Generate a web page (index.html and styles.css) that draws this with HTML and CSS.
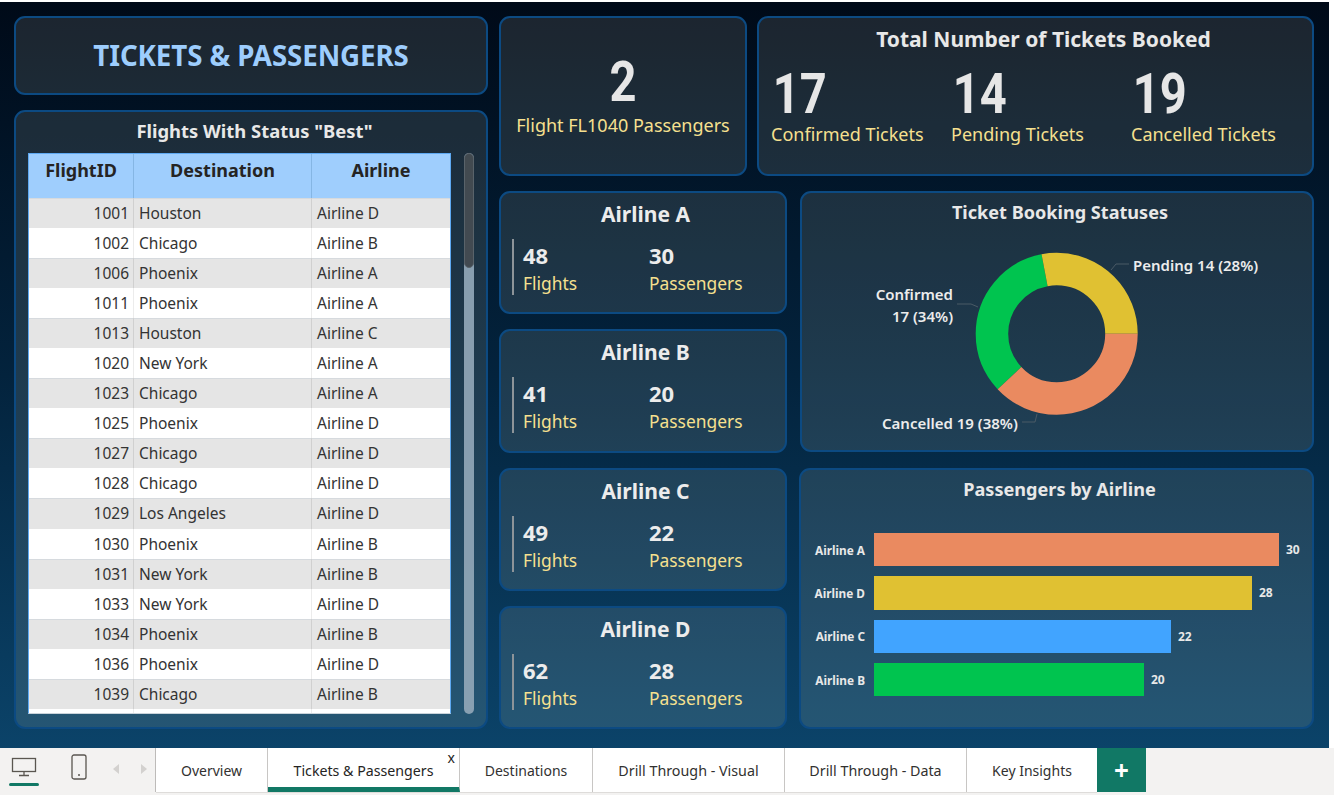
FILE: index.html
```html
<!DOCTYPE html>
<html lang="en">
<head>
<meta charset="utf-8">
<title>Tickets &amp; Passengers</title>
<link rel="stylesheet" href="styles.css">
</head>
<body>
<div class="topline"></div>
<main class="canvas">
  <section class="left">
    <header class="card title-card"><h1>TICKETS &amp; PASSENGERS</h1></header>
    <section class="card table-card">
      <h2 class="table-title">Flights With Status "Best"</h2>
      <div class="table-wrap">
        <div class="table">
          <div class="thead"><span>FlightID</span><span>Destination</span><span>Airline</span></div>
          <div class="row"><span class="id">1001</span><span>Houston</span><span>Airline D</span></div>
          <div class="row"><span class="id">1002</span><span>Chicago</span><span>Airline B</span></div>
          <div class="row"><span class="id">1006</span><span>Phoenix</span><span>Airline A</span></div>
          <div class="row"><span class="id">1011</span><span>Phoenix</span><span>Airline A</span></div>
          <div class="row"><span class="id">1013</span><span>Houston</span><span>Airline C</span></div>
          <div class="row"><span class="id">1020</span><span>New York</span><span>Airline A</span></div>
          <div class="row"><span class="id">1023</span><span>Chicago</span><span>Airline A</span></div>
          <div class="row"><span class="id">1025</span><span>Phoenix</span><span>Airline D</span></div>
          <div class="row"><span class="id">1027</span><span>Chicago</span><span>Airline D</span></div>
          <div class="row"><span class="id">1028</span><span>Chicago</span><span>Airline D</span></div>
          <div class="row"><span class="id">1029</span><span>Los Angeles</span><span>Airline D</span></div>
          <div class="row"><span class="id">1030</span><span>Phoenix</span><span>Airline B</span></div>
          <div class="row"><span class="id">1031</span><span>New York</span><span>Airline B</span></div>
          <div class="row"><span class="id">1033</span><span>New York</span><span>Airline D</span></div>
          <div class="row"><span class="id">1034</span><span>Phoenix</span><span>Airline B</span></div>
          <div class="row"><span class="id">1036</span><span>Phoenix</span><span>Airline D</span></div>
          <div class="row"><span class="id">1039</span><span>Chicago</span><span>Airline B</span></div>
          <div class="row stub"><span></span><span></span><span></span></div>
        </div>
        <div class="scrollbar"><div class="thumb"></div></div>
      </div>
    </section>
  </section>
  <section class="right">
    <div class="top-row">
      <section class="card flight-card">
        <div class="big">2</div>
        <div class="label">Flight FL1040 Passengers</div>
      </section>
      <section class="card total-card">
        <h2 class="total-title">Total Number of Tickets Booked</h2>
        <div class="totals">
          <div class="total"><div class="big">17</div><div class="label">Confirmed Tickets</div></div>
          <div class="total"><div class="big">14</div><div class="label">Pending Tickets</div></div>
          <div class="total"><div class="big">19</div><div class="label">Cancelled Tickets</div></div>
        </div>
      </section>
    </div>
    <div class="bottom-row">
      <div class="airlines">
        <section class="card airline"><h3>Airline A</h3><div class="stats"><div class="stat"><b>48</b><span>Flights</span></div><div class="stat"><b>30</b><span>Passengers</span></div></div></section>
        <section class="card airline"><h3>Airline B</h3><div class="stats"><div class="stat"><b>41</b><span>Flights</span></div><div class="stat"><b>20</b><span>Passengers</span></div></div></section>
        <section class="card airline"><h3>Airline C</h3><div class="stats"><div class="stat"><b>49</b><span>Flights</span></div><div class="stat"><b>22</b><span>Passengers</span></div></div></section>
        <section class="card airline"><h3>Airline D</h3><div class="stats"><div class="stat"><b>62</b><span>Flights</span></div><div class="stat"><b>28</b><span>Passengers</span></div></div></section>
      </div>
      <div class="charts">
        <section class="card donut-card">
          <h2 class="chart-title">Ticket Booking Statuses</h2>
          <div class="donut-area">
            <svg class="donut" viewBox="0 0 510 210" width="510" height="210">
              <circle cx="254.7" cy="101.8" r="64.75" fill="none" stroke="#00c44f" stroke-width="32.5" pathLength="100" stroke-dasharray="34 66" stroke-dashoffset="-63" transform="rotate(-90 254.7 101.8)"/>
              <circle cx="254.7" cy="101.8" r="64.75" fill="none" stroke="#e0c132" stroke-width="32.5" pathLength="100" stroke-dasharray="28 72" stroke-dashoffset="3" transform="rotate(-90 254.7 101.8)"/>
              <circle cx="254.7" cy="101.8" r="64.75" fill="none" stroke="#ea8a60" stroke-width="32.5" pathLength="100" stroke-dasharray="38 62" stroke-dashoffset="-25" transform="rotate(-90 254.7 101.8)"/>
              <path d="M309 38 L314 32 L327 32" fill="none" stroke="#4a5a66"/>
              <path d="M155 72 L169 72 L176 75" fill="none" stroke="#4a5a66"/>
              <path d="M220 190 L233 190 L235 182" fill="none" stroke="#4a5a66"/>
            </svg>
            <span class="dl dl-pending">Pending 14 (28%)</span>
            <span class="dl dl-confirmed">Confirmed<br>17 (34%)</span>
            <span class="dl dl-cancelled">Cancelled 19 (38%)</span>
          </div>
        </section>
        <section class="card bar-card">
          <h2 class="chart-title">Passengers by Airline</h2>
          <div class="bars">
            <div class="bar-row"><span class="bar-name">Airline A</span><div class="bar bar-a"></div><span class="bar-val">30</span></div>
            <div class="bar-row"><span class="bar-name">Airline D</span><div class="bar bar-d"></div><span class="bar-val">28</span></div>
            <div class="bar-row"><span class="bar-name">Airline C</span><div class="bar bar-c"></div><span class="bar-val">22</span></div>
            <div class="bar-row"><span class="bar-name">Airline B</span><div class="bar bar-b"></div><span class="bar-val">20</span></div>
          </div>
        </section>
      </div>
    </div>
  </section>
</main>
<nav class="tabbar">
  <div class="devices">
    <div class="device device-on">
      <svg width="26" height="20" viewBox="0 0 26 20"><rect x="1.5" y="1.5" width="23" height="13" fill="none" stroke="#5a5650" stroke-width="1.3"/><path d="M13 15v3M8 18.5h10" stroke="#5a5650" stroke-width="1.3"/></svg>
    </div>
    <div class="device device-phone">
      <svg width="18" height="26" viewBox="0 0 18 26"><rect x="2" y="1" width="14" height="24" rx="2" fill="none" stroke="#5a5650" stroke-width="1.3"/><path d="M8 21h2" stroke="#5a5650" stroke-width="1.3"/></svg>
    </div>
    <div class="arrows">
      <svg width="8" height="12" viewBox="0 0 8 12"><path d="M7 1v10L1 6z" fill="#d3d1cf"/></svg>
      <svg width="8" height="12" viewBox="0 0 8 12"><path d="M1 1v10l6-5z" fill="#d3d1cf"/></svg>
    </div>
  </div>
  <div class="tab tab-overview">Overview</div>
  <div class="tab tab-active">Tickets &amp; Passengers<span class="tab-x">x</span></div>
  <div class="tab tab-dest">Destinations</div>
  <div class="tab tab-visual">Drill Through - Visual</div>
  <div class="tab tab-data">Drill Through - Data</div>
  <div class="tab tab-key">Key Insights</div>
  <div class="tab-add">+</div>
</nav>
</body>
</html>
```
FILE: styles.css
```css
* { box-sizing: border-box; }
html, body { margin: 0; padding: 0; }
body {
  width: 1334px; height: 795px; overflow: hidden; background: #fff;
  font-family: "Noto Sans", "Open Sans", sans-serif; color: #e8e8e8;
}
h1, h2, h3 { margin: 0; }
.topline { height: 2px; background: #fff; }
.canvas {
  width: 1329px; height: 746px;
  background: linear-gradient(180deg, #000a18 0%, #03233d 50%, #0b4369 100%);
  padding: 14px 15px 19px 14px;
  display: flex; gap: 11px;
}
.card {
  background: rgba(255,255,225,.11);
  border: 2px solid #0c4a82;
  border-radius: 11px;
}
.left { width: 474px; display: flex; flex-direction: column; gap: 15px; }
.title-card { height: 79px; display: flex; align-items: center; justify-content: center; padding-bottom: 2px; }
h1 { font-size: 27.7px; font-weight: 700; color: #9dcdfd; letter-spacing: -.1px; }
.table-card { flex: 1; padding: 0 12px 11px 12px; display: flex; flex-direction: column; }
.table-title { font-size: 18.4px; line-height: 38px; height: 41px; padding-left: 7px; text-align: center; font-weight: 700; }
.table-wrap { flex: 1; display: flex; gap: 13px; min-height: 0; }
.table {
  width: 424px; height: 561px; overflow: hidden; background: #fff; color: #333;
  border: 1px solid #5ea9f2; border-bottom-color: #c9d3da; font-size: 15.5px;
}
.thead, .row { display: grid; grid-template-columns: 105px 178px 1fr; }
.thead {
  height: 44px; background: #9fcefd; color: #252423; font-size: 18px; font-weight: 700; text-align: center; line-height: 33px;
}
.thead span { border-right: 1px solid #85b6e4; }
.thead span:last-child { border: 0; }
.row { height: 30.05px; line-height: 30px; }
.row:nth-child(even) { background: #e5e5e5; box-shadow: inset 0 1px #d6dade; }
.row span { padding: 0 5px; border-right: 1px solid #d0d0d0; white-space: nowrap; }
.row:nth-child(odd) span { border-right-color: #ececec; }
.row span:last-child { border: 0; }
.row .id { text-align: right; padding-right: 4px; }
.scrollbar { width: 10px; height: 561px; border-radius: 5px; background: #8ea4b5; opacity: .95; }
.thumb { height: 115px; border-radius: 5px; background: #454c52; border: 1px solid #5d666d; }
.right { flex: 1; display: flex; flex-direction: column; gap: 15px; min-width: 0; }
.top-row { height: 160px; display: flex; gap: 10px; }
.flight-card { width: 248px; display: flex; flex-direction: column; align-items: center; padding-top: 33px; }
.big {
  font-family: "Roboto", "Liberation Sans", sans-serif; font-weight: 700; font-size: 56px; line-height: 62px;
  color: #e6e6e6; transform: scaleX(.84);
}
.label { font-size: 18px; line-height: 28px; color: #f6e08f; white-space: nowrap; }
.flight-card .label { margin-top: -2px; }
.total-card { flex: 1; padding: 6px 0 0 12px; }
.total-title { font-size: 21px; line-height: 30px; text-align: center; font-weight: 700; padding-left: 4px; }
.totals { display: grid; grid-template-columns: 180px 180px 1fr; margin-top: 14px; }
.total .big { padding-left: 2px; line-height: 52px; transform-origin: left center; }
.bottom-row { flex: 1; display: flex; gap: 12px; min-height: 0; }
.airlines { width: 288px; display: flex; flex-direction: column; gap: 15px; }
.airline { flex: 1; padding: 6px 11px 0 11px; }
.airline h3 { font-size: 21px; line-height: 30px; text-align: center; font-weight: 700; color: #ececec; padding-left: 5px; }
.stats { display: grid; grid-template-columns: 126px 1fr; border-left: 2px solid #8d9499; height: 56px; margin-top: 10px; padding: 3px 0 0 9px; }
.stat { display: flex; flex-direction: column; }
.stat b { font-size: 22px; line-height: 27px; font-weight: 700; color: #ececec; }
.stat span { font-size: 17.4px; line-height: 28px; color: #f6e08f; }
.charts { flex: 1; display: flex; flex-direction: column; gap: 16px; min-width: 0; }
.donut-card { height: 261px; margin-left: 1px; }
.bar-card { flex: 1; }
.chart-title { font-size: 18.1px; line-height: 26px; padding: 6px 0 0 6px; height: 39px; text-align: center; font-weight: 700; }
.donut-area { position: relative; height: 210px; }
.donut { display: block; }
.dl { position: absolute; font-size: 15px; line-height: 22px; font-weight: 600; color: #ececec; white-space: nowrap; }
.dl-pending { left: 331px; top: 22px; }
.dl-confirmed { right: 359px; top: 51px; text-align: right; }
.dl-cancelled { left: 80px; top: 180px; }
.bars { padding: 24px 0 0 73px; display: flex; flex-direction: column; gap: 10px; }
.bar-row { position: relative; display: flex; align-items: center; height: 33.3px; gap: 6px; }
.bar-name { position: absolute; right: 100%; margin-right: 9px; font-size: 11.8px; font-weight: 700; white-space: nowrap; }
.bar { height: 100%; }
.bar-a { width: 405px; background: #ea8a60; }
.bar-d { width: 378px; background: #e0c132; }
.bar-c { width: 297px; background: #41a4ff; }
.bar-b { width: 270px; background: #00c44f; }
.bar-val { font-size: 12px; font-weight: 700; margin-left: 1px; }
.tabbar { height: 47px; background: #f3f2f1; display: flex; align-items: stretch; padding-bottom: 3px; }
.devices { width: 156px; display: flex; border-right: 1px solid #bdbbb9; }
.device { width: 47px; display: flex; align-items: center; justify-content: center; padding-bottom: 6px; }
.device-on { position: relative; }
.device-on::after { content: ""; position: absolute; left: 9px; bottom: 6px; width: 30px; height: 3px; border-radius: 2px; background: #117865; }
.device-phone { width: 32px; margin-left: 16px; }
.arrows { display: flex; gap: 20px; align-items: center; margin-left: 17px; padding-bottom: 3px; }
.tab { background: #fff; color: #323130; font-size: 14px; display: flex; align-items: center; justify-content: center; border-right: 1px solid #c8c6c4; white-space: nowrap; box-shadow: 0 1px #dedcda; }
.tab-overview { width: 112px; }
.tab-active { width: 192px; position: relative; border-bottom: 5px solid #117865; color: #252423; padding-top: 5px; font-size: 14.2px; }
.tab-x { position: absolute; right: 4px; top: 1px; font-size: 14px; line-height: 18px; }
.tab-dest { width: 133px; }
.tab-visual { width: 192px; font-size: 14.3px; }
.tab-data { width: 182px; font-size: 14.3px; }
.tab-key { width: 130px; border-right: 0; }
.tab-add { width: 49px; background: #117865; color: #fff; font-size: 26px; font-weight: 700; display: flex; align-items: center; justify-content: center; line-height: 1; }
```
